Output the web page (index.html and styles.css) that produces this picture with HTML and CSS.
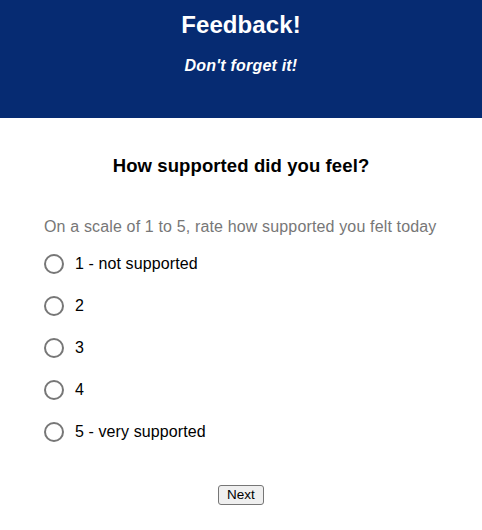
FILE: index.html
```html
<!DOCTYPE html>
<html>
<head>
<meta charset="utf-8">
<link rel="stylesheet" href="styles.css">
</head>
<body>
<header class="hero">
  <h1 class="hero-title">Feedback!</h1>
  <p class="hero-sub">Don't forget it!</p>
</header>
<main class="survey">
  <h2 class="question">How supported did you feel?</h2>
  <p class="desc">On a scale of 1 to 5, rate how supported you felt today</p>
  <div class="options">
    <label class="option"><span class="radio"></span><span>1 - not supported</span></label>
    <label class="option"><span class="radio"></span><span>2</span></label>
    <label class="option"><span class="radio"></span><span>3</span></label>
    <label class="option"><span class="radio"></span><span>4</span></label>
    <label class="option"><span class="radio"></span><span>5 - very supported</span></label>
  </div>
  <div class="actions"><button class="next">Next</button></div>
</main>
</body>
</html>
```
FILE: styles.css
```css
html, body { margin: 0; padding: 0; background: #fff; }
body { font-family: "Liberation Sans", Arial, sans-serif; color: #000; }
.hero {
  background: #062b72;
  color: #fff;
  height: 118px;
  display: flex;
  flex-direction: column;
  align-items: center;
  padding-top: 11px;
  box-sizing: border-box;
}
.hero-title { margin: 0; font-size: 24px; font-weight: bold; line-height: 27px; letter-spacing: 0.1px; }
.hero-sub { margin: 18px 0 0; font-size: 16px; font-weight: bold; font-style: italic; line-height: 19px; letter-spacing: 0.2px; }
.survey { padding: 0 44px; }
.question { margin: 37px 0 0; text-align: center; font-size: 18.5px; font-weight: bold; line-height: 22px; letter-spacing: 0.1px; }
.desc { margin: 40px 0 0; color: #777; font-size: 16px; line-height: 20px; letter-spacing: 0.15px; }
.options { display: flex; flex-direction: column; gap: 22px; margin-top: 17px; }
.option { display: flex; align-items: center; gap: 11px; font-size: 16px; line-height: 20px; letter-spacing: 0.1px; }
.radio { width: 16px; height: 16px; border: 2px solid #777; border-radius: 50%; flex: none; background: #fff; }
.actions { display: flex; justify-content: center; margin-top: 43px; }
.next {
  font-family: "Liberation Sans", Arial, sans-serif;
  font-size: 13.5px;
  padding: 1px 8px;
  border: 1px solid #767676;
  border-radius: 3px;
  background: #efefef;
  color: #000;
  height: 20px;
  line-height: 16px;
}
```
